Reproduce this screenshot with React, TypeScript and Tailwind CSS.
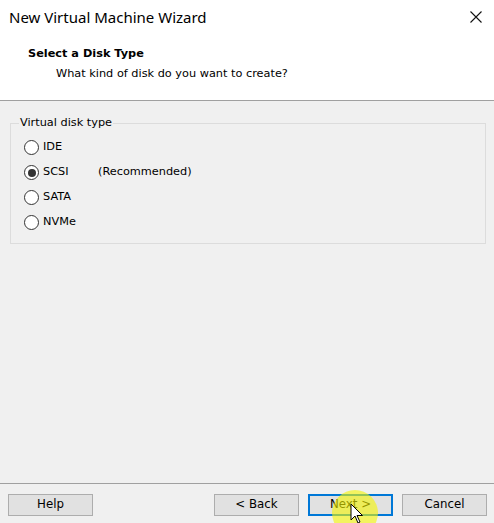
import React from "react";

const items = [
  { label: "IDE", checked: false },
  { label: "SCSI", checked: true, note: "(Recommended)" },
  { label: "SATA", checked: false },
  { label: "NVMe", checked: false },
];

function Radio({ checked }: { checked: boolean }) {
  return (
    <span className="w-[15px] h-[15px] rounded-full border border-[#333333] bg-white flex items-center justify-center shrink-0">
      {checked && <span className="w-[8px] h-[8px] rounded-full bg-[#333333]" />}
    </span>
  );
}

function Btn({ children, primary }: { children: React.ReactNode; primary?: boolean }) {
  return (
    <div
      className={
        "w-[85px] h-[22px] bg-[#e1e1e1] flex items-center justify-center text-[11.8px] text-black " +
        (primary ? "border-2 border-[#0078d7]" : "border border-[#adadad]")
      }
    >
      {children}
    </div>
  );
}

export default function App() {
  return (
    <div
      className="w-[494px] h-[523px] bg-[#f0f0f0] flex flex-col relative overflow-hidden text-black"
      style={{ fontFamily: "Tahoma, 'DejaVu Sans', sans-serif" }}
    >
      <div className="h-[101px] bg-white border-b border-[#a0a0a0] flex flex-col shrink-0">
        <div className="h-[34px] flex items-center justify-between pl-[9px] pr-[12px]">
          <span className="text-[15px] text-black" style={{ fontFamily: "'Noto Sans', sans-serif" }}>
            New Virtual Machine Wizard
          </span>
          <svg width="12" height="12" viewBox="0 0 12 12">
            <path d="M0.5 0.5 L11.5 11.5 M11.5 0.5 L0.5 11.5" stroke="#111" strokeWidth="1.1" />
          </svg>
        </div>
        <div className="pl-[28px] pt-[12px] text-[11.3px] font-bold leading-[15px]">Select a Disk Type</div>
        <div className="pl-[56px] pt-[5px] text-[11.3px] leading-[15px]">What kind of disk do you want to create?</div>
      </div>

      <div className="flex-1 px-[10px] pt-[15px]">
        <fieldset className="border border-[#dcdcdc] w-[476px] h-[128px] px-[8px] pt-[5px]">
          <legend className="text-[11.3px] px-[1px] leading-[14px]">Virtual disk type</legend>
          <div className="flex flex-col pl-[5px]">
            {items.map((it) => (
              <div key={it.label} className="h-[25px] flex items-center text-[11.3px]">
                <Radio checked={it.checked} />
                <span className="ml-[4px] w-[55px]">{it.label}</span>
                {it.note && <span>{it.note}</span>}
              </div>
            ))}
          </div>
        </fieldset>
      </div>

      <div className="border-t border-[#a0a0a0] h-[40px] shrink-0 flex items-start pt-[10px] px-[8px]">
        <Btn>Help</Btn>
        <div className="flex-1" />
        <div className="flex gap-[9px] mr-[-1px]">
          <Btn>&lt; Back</Btn>
          <Btn primary>Next &gt;</Btn>
          <Btn>Cancel</Btn>
        </div>
      </div>

      <div className="absolute left-[332px] top-[490px] w-[46px] h-[46px] rounded-full bg-[#f5f500] opacity-60 pointer-events-none" />
      <svg className="absolute left-[350px] top-[503px]" width="14" height="21" viewBox="0 0 14 21">
        <path d="M1 1 L1 17 L5 13 L8 20 L10 19 L7 12.5 L12.5 12.5 Z" fill="white" stroke="black" strokeWidth="1" />
      </svg>
    </div>
  );
}
